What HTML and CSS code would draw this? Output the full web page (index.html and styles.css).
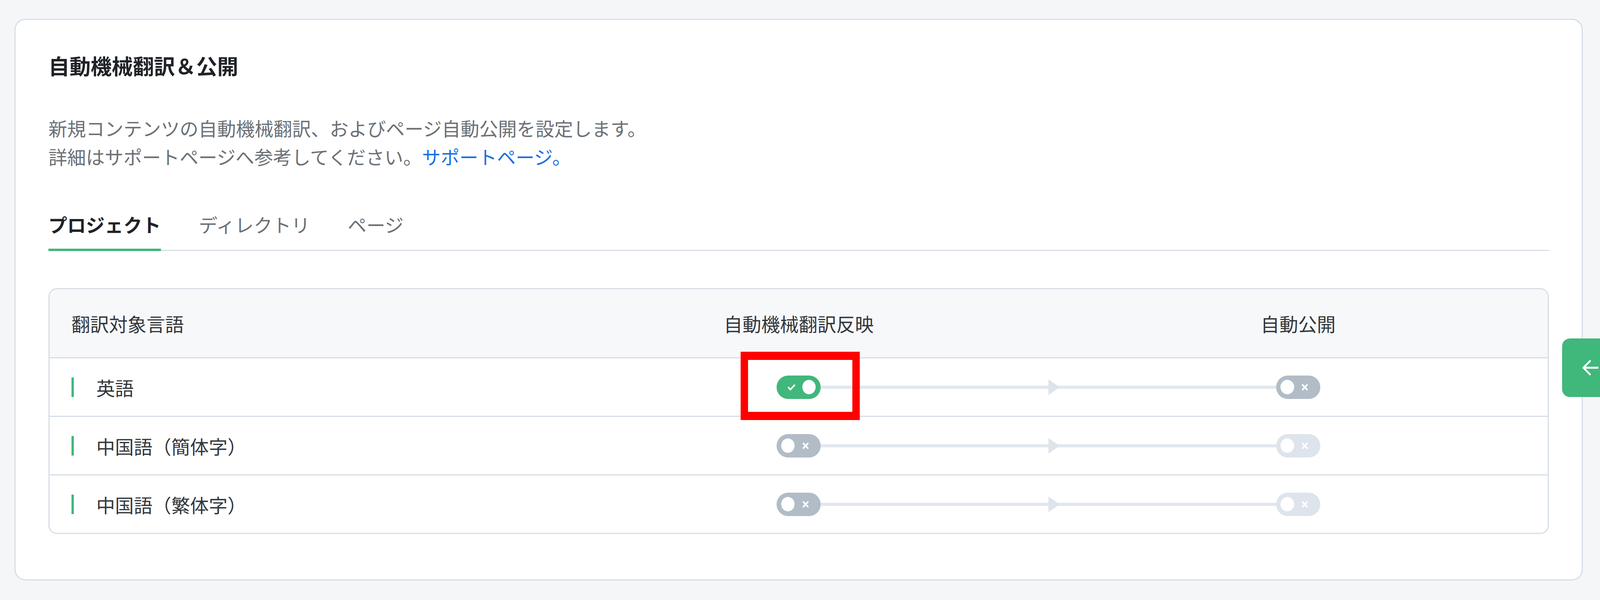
FILE: index.html
```html
<!DOCTYPE html>
<html lang="ja">

<head>
    <meta charset="UTF-8">
    <meta name="viewport" content="width=device-width, initial-scale=1.0">
    <title>自動機械翻訳＆公開</title>
    <link rel="stylesheet" href="styles.css">
</head>

<body>
    <div class="card">
        <h2 class="card-title">自動機械翻訳＆公開</h2>
        <p class="card-desc">
            新規コンテンツの自動機械翻訳、およびページ自動公開を設定します。<br>詳細はサポートページへ参考してください。<a href="#">サポートページ。</a>
        </p>

        <div class="tabs">
            <div class="tab active">プロジェクト</div>
            <div class="tab">ディレクトリ</div>
            <div class="tab">ページ</div>
        </div>

        <div class="lang-table">
            <div class="lang-row head">
                <div class="cell">翻訳対象言語</div>
                <div class="cell center">自動機械翻訳反映</div>
                <div class="cell center">自動公開</div>
            </div>

            <div class="lang-row">
                <div class="cell lang"><span class="mark"></span>英語</div>
                <div class="cell flow">
                    <span class="spacer"></span>
                    <span class="switch on highlighted">
                        <span class="icon"><svg class="check" viewBox="0 0 22 18" preserveAspectRatio="none"><polyline points="3,10 8,15 19,4" /></svg></span>
                        <span class="knob"></span>
                    </span>
                    <span class="link"><span class="bar"></span></span>
                </div>
                <div class="cell flow">
                    <span class="link"><span class="arrow"></span><span class="bar"></span></span>
                    <span class="switch off">
                        <span class="knob"></span>
                        <span class="icon"><svg class="cross" viewBox="0 0 20 20" preserveAspectRatio="none"><path d="M4 4L16 16M16 4L4 16" /></svg></span>
                    </span>
                    <span class="spacer"></span>
                </div>
            </div>

            <div class="lang-row">
                <div class="cell lang"><span class="mark"></span>中国語（簡体字）</div>
                <div class="cell flow">
                    <span class="spacer"></span>
                    <span class="switch off">
                        <span class="knob"></span>
                        <span class="icon"><svg class="cross" viewBox="0 0 20 20" preserveAspectRatio="none"><path d="M4 4L16 16M16 4L4 16" /></svg></span>
                    </span>
                    <span class="link"><span class="bar"></span></span>
                </div>
                <div class="cell flow">
                    <span class="link"><span class="arrow"></span><span class="bar"></span></span>
                    <span class="switch disabled">
                        <span class="knob"></span>
                        <span class="icon"><svg class="cross" viewBox="0 0 20 20" preserveAspectRatio="none"><path d="M4 4L16 16M16 4L4 16" /></svg></span>
                    </span>
                    <span class="spacer"></span>
                </div>
            </div>

            <div class="lang-row">
                <div class="cell lang"><span class="mark"></span>中国語（繁体字）</div>
                <div class="cell flow">
                    <span class="spacer"></span>
                    <span class="switch off">
                        <span class="knob"></span>
                        <span class="icon"><svg class="cross" viewBox="0 0 20 20" preserveAspectRatio="none"><path d="M4 4L16 16M16 4L4 16" /></svg></span>
                    </span>
                    <span class="link"><span class="bar"></span></span>
                </div>
                <div class="cell flow">
                    <span class="link"><span class="arrow"></span><span class="bar"></span></span>
                    <span class="switch disabled">
                        <span class="knob"></span>
                        <span class="icon"><svg class="cross" viewBox="0 0 20 20" preserveAspectRatio="none"><path d="M4 4L16 16M16 4L4 16" /></svg></span>
                    </span>
                    <span class="spacer"></span>
                </div>
            </div>
        </div>
    </div>

    <!-- 右側のサイドパネル開閉ボタン -->
    <div class="side-toggle">
        <svg viewBox="0 0 48 40" preserveAspectRatio="none"><path d="M24 3L6 20L24 37M6 20H46" /></svg>
    </div>
</body>

</html>
```

FILE: styles.css
```css
:root {
    --primary: #40b77b;
    --text: #2b2f33;
    --muted: #6b7177;
    --link: #1a6fe0;
    --border: #d7dee7;
    --bg: #f5f6f8;
    --head-bg: #f7f8fa;
    --off: #b1bcc7;
    --disabled: #dee4ec;
    --connector: #e2e7ee;
    /* 横方向の基準単位（デザイン幅 4400px） */
    --x: calc(100vw / 4400);
}

*,
*::before,
*::after {
    margin: 0;
    padding: 0;
    box-sizing: border-box;
}

body {
    background-color: var(--bg);
    color: var(--text);
    font-family: "Noto Sans CJK JP", "Noto Sans", sans-serif;
    font-size: 48px;
    padding: 48px 0 50px;
    overflow: hidden;
}

.card {
    background-color: #fff;
    border: 3px solid var(--border);
    border-radius: 28px;
    margin: 0 calc(47 * var(--x)) 0 calc(40 * var(--x));
    padding: 78px calc(90 * var(--x)) 116px;
}

.card-title {
    font-size: 54px;
    font-weight: 700;
    line-height: 78px;
    color: #1f2328;
    margin-bottom: 84px;
}

.card-desc {
    line-height: 73px;
    color: var(--muted);
    margin-bottom: 101px;
}

.card-desc a {
    color: var(--link);
    text-decoration: none;
}

/* タブ */

.tabs {
    display: flex;
    gap: calc(104 * var(--x));
    border-bottom: 3px solid var(--border);
}

.tab {
    line-height: 73px;
    padding-bottom: 26px;
    border-bottom: 6px solid transparent;
    margin-bottom: -3px;
    color: var(--muted);
}

.tab.active {
    color: #1f2328;
    font-weight: 700;
    border-bottom-color: var(--primary);
}

/* 言語テーブル */

.lang-table {
    margin-top: 95px;
    border: 3px solid var(--border);
    border-radius: 22px;
    overflow: hidden;
}

.lang-row {
    display: grid;
    grid-template-columns: repeat(3, 1fr);
    height: 150px;
    border-top: 3px solid var(--border);
}

.lang-row.head {
    height: 174px;
    border-top: none;
    background-color: var(--head-bg);
    color: #33373b;
}

.cell {
    display: flex;
    align-items: center;
    padding-left: calc(60 * var(--x));
}

.cell.center {
    justify-content: center;
    padding-left: 0;
}

.cell.lang {
    color: #33373b;
}

.mark {
    width: 6px;
    height: 50px;
    background-color: var(--primary);
    margin-right: calc(62 * var(--x));
}

.cell.flow {
    padding-left: 0;
}

.spacer {
    flex: 1;
}

.link {
    flex: 1;
    display: flex;
    align-items: center;
    height: 40px;
}

.bar {
    flex: 1;
    height: 8px;
    background-color: var(--connector);
}

.arrow {
    width: 0;
    height: 0;
    border-left: calc(32 * var(--x)) solid var(--disabled);
    border-top: 20px solid transparent;
    border-bottom: 20px solid transparent;
    margin-right: calc(-32 * var(--x));
    position: relative;
}

/* スイッチ */

.switch {
    position: relative;
    width: calc(121 * var(--x));
    height: 60px;
    border-radius: 30px;
    display: flex;
    align-items: center;
    padding: 0 calc(12 * var(--x));
}

.switch .knob {
    width: calc(37 * var(--x));
    height: 37px;
    border-radius: 50%;
    background-color: #fff;
}

.switch .icon {
    flex: 1;
    display: flex;
    justify-content: center;
    align-items: center;
}

.switch svg {
    fill: none;
    stroke: #fff;
    stroke-width: 4.5;
    stroke-linecap: round;
    stroke-linejoin: round;
}

.switch .check {
    width: calc(22 * var(--x));
    height: 18px;
}

.switch .cross {
    width: calc(20 * var(--x));
    height: 20px;
}

.switch.on {
    background-color: var(--primary);
    padding-right: calc(14 * var(--x));
}

.switch.off {
    background-color: var(--off);
}

.switch.disabled {
    background-color: var(--disabled);
}

/* 注目枠 */

.switch.highlighted::after {
    content: "";
    position: absolute;
    left: calc(-99 * var(--x));
    top: -61px;
    width: calc(327 * var(--x));
    height: 175px;
    border: 21px solid #ff0000;
    border-left-width: calc(21 * var(--x));
    border-right-width: calc(21 * var(--x));
}

.side-toggle {
    position: fixed;
    top: 867px;
    right: 0;
    width: calc(104 * var(--x));
    height: 150px;
    background-color: var(--primary);
    border-radius: 20px 0 0 20px;
    display: flex;
    align-items: center;
    padding-left: calc(52 * var(--x));
}

.side-toggle svg {
    width: calc(48 * var(--x));
    height: 40px;
    fill: none;
    stroke: #fff;
    stroke-width: 5;
    stroke-linecap: round;
    stroke-linejoin: round;
}
```
